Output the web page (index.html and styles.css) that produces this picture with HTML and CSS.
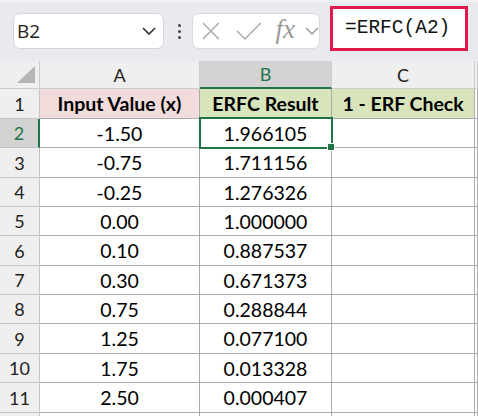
FILE: index.html
```html
<!DOCTYPE html>
<html lang="en">
    <head>
        <meta charset="UTF-8" />
        <meta name="viewport" content="width=device-width, initial-scale=1.0" />
        <title>ERFC</title>
        <link rel="stylesheet" href="styles.css">
    </head>
    <body>
        <div class="toolbar">
            <div class="nameBox">
                <span>B2</span>
                <svg class="chev" width="16" height="10" viewBox="0 0 16 10"><polyline points="2,2 8,8 14,2" fill="none" stroke="#333" stroke-width="1.6"/></svg>
            </div>
            <div class="dots"><i></i><i></i><i></i></div>
            <div class="fxButtons">
                <svg width="20" height="18" viewBox="0 0 20 18"><path d="M2 1 L18 17 M18 1 L2 17" stroke="#aaa" stroke-width="1.5" fill="none"/></svg>
                <svg class="check" width="26" height="18" viewBox="0 0 26 18"><polyline points="1,9 9,17 25,1" fill="none" stroke="#aaa" stroke-width="1.5"/></svg>
                <span class="fx">fx</span>
                <svg class="chev2" width="14" height="10" viewBox="0 0 14 10"><polyline points="1,2 7,8 13,2" fill="none" stroke="#999" stroke-width="1.5"/></svg>
            </div>
            <div class="formula">=ERFC(A2)</div>
        </div>
        <div class="sheet">
            <div class="hd corner"><span class="tri"></span></div>
            <div class="hd">A</div>
            <div class="hd sel">B</div>
            <div class="hd">C</div>
            <div class="hd"></div>

            <div class="rh">1</div>
            <div class="c b pink">Input Value (x)</div>
            <div class="c b green">ERFC Result</div>
            <div class="c b green">1 - ERF Check</div>
            <div class="c"></div>

            <div class="rh sel">2</div>
            <div class="c">-1.50</div>
            <div class="c active">1.966105</div>
            <div class="c"></div>
            <div class="c"></div>

            <div class="rh">3</div>
            <div class="c">-0.75</div>
            <div class="c">1.711156</div>
            <div class="c"></div>
            <div class="c"></div>

            <div class="rh">4</div>
            <div class="c">-0.25</div>
            <div class="c">1.276326</div>
            <div class="c"></div>
            <div class="c"></div>

            <div class="rh">5</div>
            <div class="c">0.00</div>
            <div class="c">1.000000</div>
            <div class="c"></div>
            <div class="c"></div>

            <div class="rh">6</div>
            <div class="c">0.10</div>
            <div class="c">0.887537</div>
            <div class="c"></div>
            <div class="c"></div>

            <div class="rh">7</div>
            <div class="c">0.30</div>
            <div class="c">0.671373</div>
            <div class="c"></div>
            <div class="c"></div>

            <div class="rh">8</div>
            <div class="c">0.75</div>
            <div class="c">0.288844</div>
            <div class="c"></div>
            <div class="c"></div>

            <div class="rh">9</div>
            <div class="c">1.25</div>
            <div class="c">0.077100</div>
            <div class="c"></div>
            <div class="c"></div>

            <div class="rh">10</div>
            <div class="c">1.75</div>
            <div class="c">0.013328</div>
            <div class="c"></div>
            <div class="c"></div>

            <div class="rh">11</div>
            <div class="c">2.50</div>
            <div class="c">0.000407</div>
            <div class="c"></div>
            <div class="c"></div>

            <div class="rh"></div>
            <div class="c"></div>
            <div class="c"></div>
            <div class="c"></div>
            <div class="c"></div>
        </div>
    </body>
</html>
```

FILE: styles.css
```css
body {
    margin: 0;
    height: 416px;
    background-color: #ffffff;
    font-family: Lato, "Open Sans", sans-serif;
    overflow: hidden;
}
.toolbar {
    height: 61px;
    box-sizing: border-box;
    background-color: #e8eaed;
    border-top: 2px solid #f1f2f4;
    display: flex;
    align-items: flex-start;
    padding-top: 4px;
    padding-left: 13px;
}
.nameBox {
    margin-top: 7px;
    width: 151px;
    height: 36px;
    box-sizing: border-box;
    background-color: #ffffff;
    border: 1px solid #d3d5d8;
    border-radius: 7px;
    display: flex;
    align-items: center;
    justify-content: space-between;
    padding: 0 6px 0 3px;
    font-family: "Open Sans", sans-serif;
    font-size: 19px;
    color: #222;
}
.dots {
    margin: 18px 0 0 12px;
    width: 7px;
    display: flex;
    flex-direction: column;
    align-items: center;
    gap: 3px;
}
.dots i {
    display: block;
    width: 3px;
    height: 3px;
    border-radius: 50%;
    background-color: #444;
}
.fxButtons {
    margin: 7px 0 0 9px;
    width: 128px;
    height: 36px;
    box-sizing: border-box;
    background-color: #ffffff;
    border: 1px solid #d8dadd;
    border-radius: 7px;
    display: flex;
    align-items: center;
    padding-left: 8px;
}
.fxButtons .check {
    margin-left: 15px;
}
.fx {
    margin-left: 14px;
    font-family: "Liberation Serif", serif;
    font-style: italic;
    font-size: 27px;
    color: #9a9a9a;
    line-height: 1;
    margin-top: -4px;
}
.chev2 {
    margin-left: 10px;
}
.formula {
    margin-left: 10px;
    width: 138px;
    height: 45px;
    box-sizing: border-box;
    background-color: #ffffff;
    border: 3px solid #e2194b;
    padding-left: 12px;
    font-family: "Liberation Mono", monospace;
    font-size: 19.5px;
    line-height: 39px;
    color: #111;
}
.sheet {
    height: 355px;
    overflow: hidden;
    display: grid;
    grid-template-columns: 40px 160px 132px 143px 1fr;
    grid-template-rows: 28px 30px 29px 30px 29px 29px 30px 29px 29px 30px 29px 30px 30px;
}
.sheet > div {
    box-sizing: border-box;
    border-right: 1px solid #ababab;
    border-bottom: 1px solid #ababab;
    display: flex;
    align-items: center;
    justify-content: center;
    font-size: 19.5px;
    color: #000;
    white-space: nowrap;
}
.sheet > .hd {
    background-color: #efefef;
    border-color: #cdcdcd;
    font-size: 18px;
    color: #222;
}
.sheet > .hd.sel {
    background-color: #d3d3d3;
    color: #217346;
    border-bottom: 2px solid #217346;
}
.corner {
    position: relative;
}
.tri {
    position: absolute;
    right: 4px;
    bottom: 5px;
    width: 0;
    height: 0;
    border-left: 18px solid transparent;
    border-bottom: 17px solid #b5b5b5;
}
.sheet > .rh {
    background-color: #efefef;
    border-color: #c4c4c4;
    font-size: 18px;
    color: #222;
}
.sheet > .rh.sel {
    background-color: #d3d3d3;
    color: #217346;
    border-right: 2px solid #217346;
}
.b {
    font-weight: bold;
}
.sheet > .b {
    font-size: 19.5px;
}
.pink {
    background-color: #f2dcdb;
}
.green {
    background-color: #d8e4bc;
}
.active {
    position: relative;
}
.active::after {
    content: "";
    position: absolute;
    top: -2px;
    left: -1px;
    right: -2px;
    bottom: -2px;
    border: 2px solid #217346;
}
.active::before {
    content: "";
    position: absolute;
    right: -4px;
    bottom: -4px;
    width: 6px;
    height: 6px;
    background-color: #217346;
    border: 1px solid #ffffff;
    z-index: 1;
}
```
